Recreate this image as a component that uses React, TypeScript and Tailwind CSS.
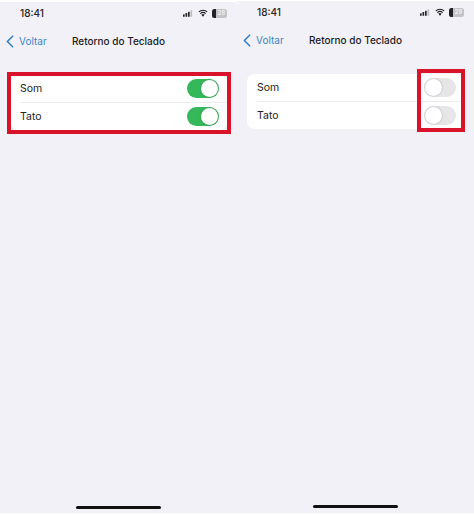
const font = { fontFamily: "Inter, 'Liberation Sans', sans-serif" };

function StatusIcons() {
  return (
    <div className="flex items-center gap-[4px]">
      <svg width="10" height="7" viewBox="0 0 12 8">
        <rect x="0" y="5" width="2" height="3" rx="0.5" fill="#222" />
        <rect x="3" y="3.5" width="2" height="4.5" rx="0.5" fill="#222" />
        <rect x="6" y="2" width="2" height="6" rx="0.5" fill="#222" />
        <rect x="9" y="0" width="2" height="8" rx="0.5" fill="#bbb" />
      </svg>
      <svg width="10" height="8" viewBox="0 0 12 9" className="ml-[1px]">
        <path d="M6 9 L4 6.6 A3 3 0 0 1 8 6.6 Z" fill="#222" />
        <path d="M2.8 5.2 A4.8 4.8 0 0 1 9.2 5.2" stroke="#222" strokeWidth="1.4" fill="none" />
        <path d="M1 3.2 A7.2 7.2 0 0 1 11 3.2" stroke="#222" strokeWidth="1.4" fill="none" />
      </svg>
      <div className="flex h-[9px] w-[15px] items-center overflow-hidden rounded-[2.5px] bg-[#c4c4c8]">
        <div className="h-full w-[4px] bg-[#222]" />
        <span className="flex-1 text-center text-[6px] leading-none text-white">28</span>
      </div>
    </div>
  );
}

function Toggle({ on }: { on: boolean }) {
  return (
    <div
      className={
        on
          ? "flex h-[19px] w-[32px] justify-end rounded-full bg-[#34b85a] p-[1px]"
          : "flex h-[19px] w-[32px] justify-start rounded-full bg-[#e6e6e9] p-[1px]"
      }
    >
      <div className="h-[17px] w-[17px] rounded-full bg-white shadow-[0_0_2px_rgba(0,0,0,0.3)]" />
    </div>
  );
}

function Row({ label, on }: { label: string; on: boolean }) {
  return (
    <div className="flex h-[27px] items-center justify-between pr-[8px]">
      <span className="text-[10.5px] text-[#222]">{label}</span>
      <Toggle on={on} />
    </div>
  );
}

function Phone({ on, top, bar }: { on: boolean; top: string; bar: string }) {
  return (
    <div className={"flex w-[237px] flex-col bg-[#f2f1f7] " + top}>
      <div className="flex h-[22px] items-center justify-between pl-[20px] pr-[10px]">
        <span className="text-[10px] font-medium text-[#222]">18:41</span>
        <StatusIcons />
      </div>
      <div className="relative mt-[4px] flex h-[26px] items-center justify-center">
        <div className="absolute left-[6px] flex items-center gap-[5px]">
          <svg width="8" height="13" viewBox="0 0 9 14" fill="none">
            <path d="M7.5 1 L1.5 7 L7.5 13" stroke="#2f7fc4" strokeWidth="1.7" strokeLinecap="round" strokeLinejoin="round" />
          </svg>
          <span className="text-[10px] text-[#3b86c4]">Voltar</span>
        </div>
        <span className="text-[10px] font-medium text-[#1c1c1e]">Retorno do Teclado</span>
      </div>
      <div className="mx-[10px] mt-[21px] rounded-[8px] bg-white pl-[10px]">
        <Row label="Som" on={on} />
        <div className="h-px bg-[#ececee]" />
        <Row label="Tato" on={on} />
      </div>
      <div className={"mx-auto mt-auto h-[3px] w-[85px] rounded-full bg-[#111] " + bar} />
    </div>
  );
}

export default function App() {
  return (
    <div className="relative flex h-[514px] w-[474px] overflow-hidden bg-white pb-px" style={font}>
      <Phone on top="mt-[2px]" bar="mb-[4px]" />
      <Phone on={false} top="mt-[1px]" bar="mb-[5px]" />
      {/* red highlight boxes */}
      <div className="absolute left-[7px] top-[72px] h-[62px] w-[224px] border-4 border-[#d9142a]" />
      <div className="absolute left-[417px] top-[69px] h-[63px] w-[48px] border-4 border-[#d9142a]" />
    </div>
  );
}
